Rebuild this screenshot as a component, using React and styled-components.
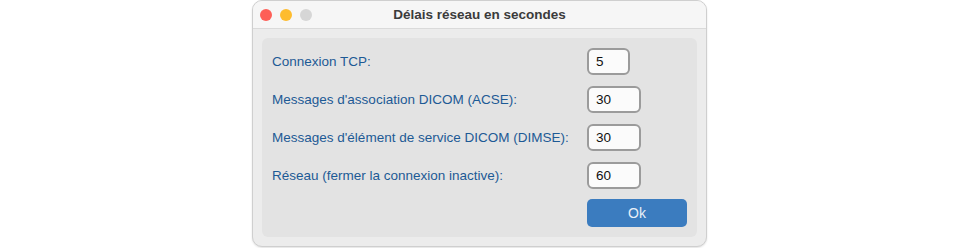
import React from "react";
import styled, { createGlobalStyle } from "styled-components";

const Global = createGlobalStyle`
  html, body { margin: 0; padding: 0; background: #ffffff; }
  body { font-family: "Liberation Sans", Arial, sans-serif; }
`;

const Page = styled.div`
  width: 960px;
  height: 248px;
  display: flex;
  justify-content: center;
  align-items: flex-start;
  box-sizing: border-box;
`;

const Window = styled.div`
  width: 455px;
  height: 247px;
  margin-left: -1px;
  box-sizing: border-box;
  background: #ececec;
  border: 1px solid #cfcfcf;
  border-radius: 10px;
  overflow: hidden;
  display: flex;
  flex-direction: column;
  box-shadow: 0 1px 2px rgba(0,0,0,0.12);
`;

const TitleBar = styled.div`
  height: 28px;
  flex: none;
  background: #f6f6f6;
  border-bottom: 1px solid #dadada;
  box-sizing: border-box;
  display: flex;
  align-items: center;
  position: relative;
  padding-left: 7px;
  gap: 8px;
`;

const Light = styled.span`
  width: 12px;
  height: 12px;
  border-radius: 50%;
  background: ${p => p.$c};
  flex: none;
`;

const Title = styled.div`
  position: absolute;
  left: 0;
  right: 0;
  top: 0;
  bottom: 0;
  display: flex;
  align-items: center;
  justify-content: center;
  font-weight: bold;
  font-size: 13.5px;
  color: #3b3b3b;
  pointer-events: none;
`;

const Body = styled.div`
  flex: 1;
  padding: 9px;
  display: flex;
`;

const Panel = styled.div`
  flex: 1;
  background: #e3e3e3;
  border-radius: 6px;
  padding: 10px 10px 8px 10px;
  display: grid;
  grid-template-columns: 315px auto;
  grid-auto-rows: 27px;
  row-gap: 11px;
  align-items: center;
  align-content: start;
`;

const Label = styled.div`
  font-size: 13.5px;
  color: #1d5a95;
  white-space: nowrap;
`;

const Field = styled.input`
  box-sizing: border-box;
  width: ${p => p.$w}px;
  height: 27px;
  border: 2px solid #9b9b9b;
  border-radius: 6px;
  background: #fbfbfb;
  font-family: "Liberation Sans", Arial, sans-serif;
  font-size: 13.5px;
  color: #111;
  padding: 0 0 0 7px;
  outline: none;
`;

const OkButton = styled.button`
  grid-column: 2;
  width: 100px;
  height: 28px;
  margin-top: -1px;
  border: none;
  border-radius: 5px;
  background: #3b7cbf;
  color: #e9f0f8;
  font-family: "Liberation Sans", Arial, sans-serif;
  font-size: 14px;
`;

const rows = [
  ["Connexion TCP:", "5", 43],
  ["Messages d'association DICOM (ACSE):", "30", 54],
  ["Messages d'élément de service DICOM (DIMSE):", "30", 54],
  ["Réseau (fermer la connexion inactive):", "60", 54],
];

export default function App() {
  return (
    <>
      <Global />
      <Page>
        <Window>
          <TitleBar>
            <Light $c="#fe5f57" />
            <Light $c="#febc2e" />
            <Light $c="#d6d6d6" />
            <Title>Délais réseau en secondes</Title>
          </TitleBar>
          <Body>
            <Panel>
              {rows.map(([l, v, w]) => (
                <React.Fragment key={l}>
                  <Label>{l}</Label>
                  <Field $w={w} defaultValue={v} />
                </React.Fragment>
              ))}
              <OkButton>Ok</OkButton>
            </Panel>
          </Body>
        </Window>
      </Page>
    </>
  );
}
